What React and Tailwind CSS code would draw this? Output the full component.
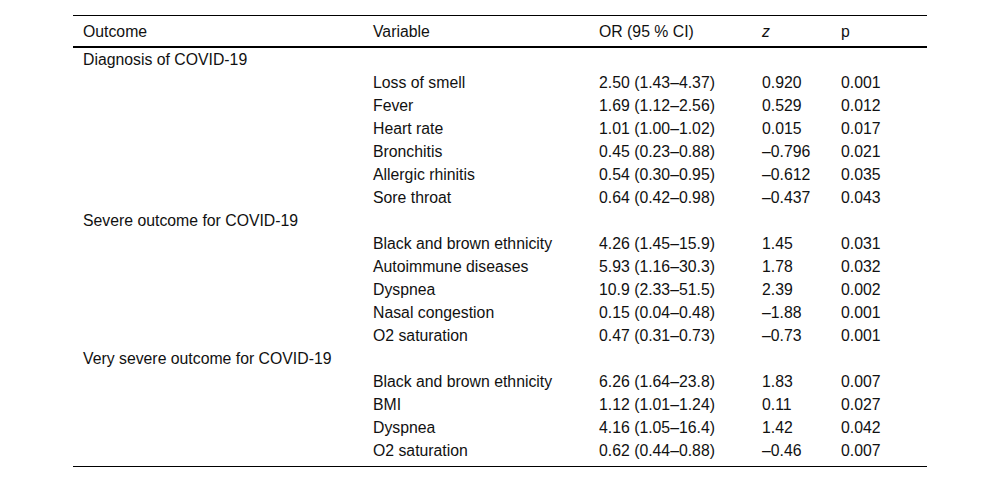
const groups = [
  {
    outcome: "Diagnosis of COVID-19",
    rows: [
      ["Loss of smell", "2.50 (1.43–4.37)", "0.920", "0.001"],
      ["Fever", "1.69 (1.12–2.56)", "0.529", "0.012"],
      ["Heart rate", "1.01 (1.00–1.02)", "0.015", "0.017"],
      ["Bronchitis", "0.45 (0.23–0.88)", "–0.796", "0.021"],
      ["Allergic rhinitis", "0.54 (0.30–0.95)", "–0.612", "0.035"],
      ["Sore throat", "0.64 (0.42–0.98)", "–0.437", "0.043"],
    ],
  },
  {
    outcome: "Severe outcome for COVID-19",
    rows: [
      ["Black and brown ethnicity", "4.26 (1.45–15.9)", "1.45", "0.031"],
      ["Autoimmune diseases", "5.93 (1.16–30.3)", "1.78", "0.032"],
      ["Dyspnea", "10.9 (2.33–51.5)", "2.39", "0.002"],
      ["Nasal congestion", "0.15 (0.04–0.48)", "–1.88", "0.001"],
      ["O2 saturation", "0.47 (0.31–0.73)", "–0.73", "0.001"],
    ],
  },
  {
    outcome: "Very severe outcome for COVID-19",
    rows: [
      ["Black and brown ethnicity", "6.26 (1.64–23.8)", "1.83", "0.007"],
      ["BMI", "1.12 (1.01–1.24)", "0.11", "0.027"],
      ["Dyspnea", "4.16 (1.05–16.4)", "1.42", "0.042"],
      ["O2 saturation", "0.62 (0.44–0.88)", "–0.46", "0.007"],
    ],
  },
];

export default function App() {
  return (
    <div className="w-[1000px] h-[484px] bg-white pt-[15px] pl-[73px] font-['Liberation_Sans',Arial,sans-serif] text-[15.8px] leading-[22px] text-[#111]">
      <div className="w-[854px] border-t border-b border-black pb-[4px]">
        <table className="w-full border-collapse table-fixed">
          <colgroup>
            <col className="w-[290px]" />
            <col className="w-[226px]" />
            <col className="w-[163px]" />
            <col className="w-[79px]" />
            <col />
          </colgroup>
          <thead>
            <tr className="h-[31px] border-b-2 border-black text-left">
              <th className="font-normal pl-[10px] pt-px">Outcome</th>
              <th className="font-normal pl-[10px] pt-px">Variable</th>
              <th className="font-normal pl-[10px] pt-px">OR (95 % CI)</th>
              <th className="font-normal italic pl-[10px] pt-px">z</th>
              <th className="font-normal pl-[10px] pt-px">p</th>
            </tr>
          </thead>
          <tbody>
            {groups.map((g) => (
              <>
                <tr key={g.outcome} className="h-[23px]">
                  <td className="pl-[10px] pt-px">{g.outcome}</td>
                  <td />
                  <td />
                  <td />
                  <td />
                </tr>
                {g.rows.map((r, i) => (
                  <tr key={g.outcome + i} className="h-[23px]">
                    <td />
                    {r.map((c, j) => (
                      <td key={j} className="pl-[10px] pt-px">
                        {c}
                      </td>
                    ))}
                  </tr>
                ))}
              </>
            ))}
          </tbody>
        </table>
      </div>
    </div>
  );
}
